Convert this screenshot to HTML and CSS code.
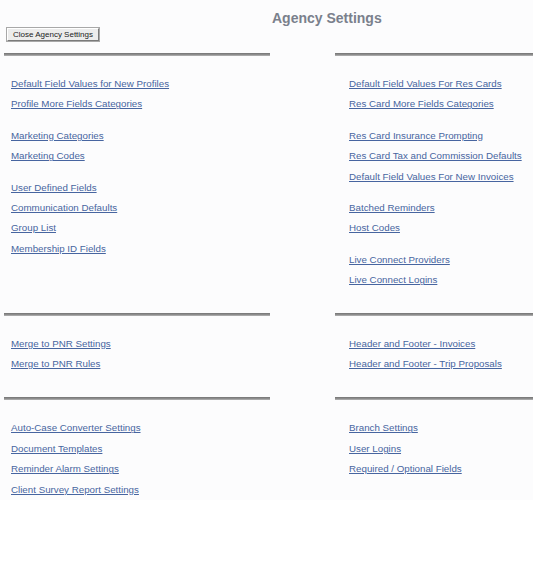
FILE: index.html
```html
<!DOCTYPE html>
<html>
<head>
<meta charset="utf-8">
<title>Agency Settings</title>
<link rel="stylesheet" href="styles.css">
</head>
<body>
<div class="page">
  <div class="header">
    <h1 class="title">Agency Settings</h1>
    <button class="close-btn" type="button">Close Agency Settings</button>
  </div>

  <div class="section">
    <div class="rules"><hr class="rule"><hr class="rule"></div>
    <div class="cols">
      <div class="col left">
        <div class="group">
          <a href="#">Default Field Values for New Profiles</a>
          <a href="#">Profile More Fields Categories</a>
        </div>
        <div class="group">
          <a href="#">Marketing Categories</a>
          <a href="#">Marketing Codes</a>
        </div>
        <div class="group">
          <a href="#">User Defined Fields</a>
          <a href="#">Communication Defaults</a>
          <a href="#">Group List</a>
          <a href="#">Membership ID Fields</a>
        </div>
      </div>
      <div class="col right">
        <div class="group">
          <a href="#">Default Field Values For Res Cards</a>
          <a href="#">Res Card More Fields Categories</a>
        </div>
        <div class="group">
          <a href="#">Res Card Insurance Prompting</a>
          <a href="#">Res Card Tax and Commission Defaults</a>
          <a href="#">Default Field Values For New Invoices</a>
        </div>
        <div class="group">
          <a href="#">Batched Reminders</a>
          <a href="#">Host Codes</a>
        </div>
        <div class="group">
          <a href="#">Live Connect Providers</a>
          <a href="#">Live Connect Logins</a>
        </div>
      </div>
    </div>
  </div>

  <div class="section">
    <div class="rules"><hr class="rule"><hr class="rule"></div>
    <div class="cols">
      <div class="col left">
        <div class="group">
          <a href="#">Merge to PNR Settings</a>
          <a href="#">Merge to PNR Rules</a>
        </div>
      </div>
      <div class="col right">
        <div class="group">
          <a href="#">Header and Footer - Invoices</a>
          <a href="#">Header and Footer - Trip Proposals</a>
        </div>
      </div>
    </div>
  </div>

  <div class="section last">
    <div class="rules"><hr class="rule"><hr class="rule"></div>
    <div class="cols">
      <div class="col left">
        <div class="group">
          <a href="#">Auto-Case Converter Settings</a>
          <a href="#">Document Templates</a>
          <a href="#">Reminder Alarm Settings</a>
          <a href="#">Client Survey Report Settings</a>
        </div>
      </div>
      <div class="col right">
        <div class="group">
          <a href="#">Branch Settings</a>
          <a href="#">User Logins</a>
          <a href="#">Required / Optional Fields</a>
        </div>
      </div>
    </div>
  </div>
</div>
</body>
</html>
```

FILE: styles.css
```css
html, body {
  margin: 0;
  padding: 0;
  background: #ffffff;
}

body {
  font-family: "Liberation Sans", Arial, sans-serif;
}

.page {
  width: 533px;
  background: #fcfcfd;
}

.header {
  display: flex;
  flex-direction: column;
  padding: 10px 0 0 7px;
  height: 43px;
  box-sizing: border-box;
}

.title {
  margin: 0 0 0 265px;
  font-size: 14px;
  font-weight: bold;
  line-height: 16px;
  color: #7a808c;
}

.close-btn {
  align-self: flex-start;
  margin-top: 2px;
  width: 92px;
  height: 13px;
  padding: 0;
  font-family: "Liberation Sans", Arial, sans-serif;
  font-size: 8px;
  line-height: 11px;
  color: #222;
  background: #ececec;
  border: 1px solid;
  border-color: #ffffff #7a7a7a #7a7a7a #ffffff;
  box-shadow: 0 0 0 1px #a8a8a8;
}

.section {
  padding-top: 10px;
}

.section.last {
  padding-top: 11px;
}

.rules {
  display: grid;
  grid-template-columns: 266px 198px;
  column-gap: 65px;
  padding-left: 4px;
}

.rule {
  margin: 0;
  height: 1px;
  background: #8c8c8c;
  border: 0;
  border-top: 1px solid #7c7c7c;
  border-bottom: 1px solid #a8a8a8;
}

.cols {
  display: grid;
  grid-template-columns: 338px 195px;
  padding: 18px 0 12px 0;
}

.col.left,
.col.right {
  padding-left: 11px;
}

.group {
  display: flex;
  flex-direction: column;
  align-items: flex-start;
}

.group + .group {
  margin-top: 11px;
}

.group a {
  font-size: 9.75px;
  line-height: 20.4px;
  color: #4765a0;
  text-decoration: underline;
  white-space: nowrap;
}

.section.last .cols {
  padding-bottom: 0;
}
```
